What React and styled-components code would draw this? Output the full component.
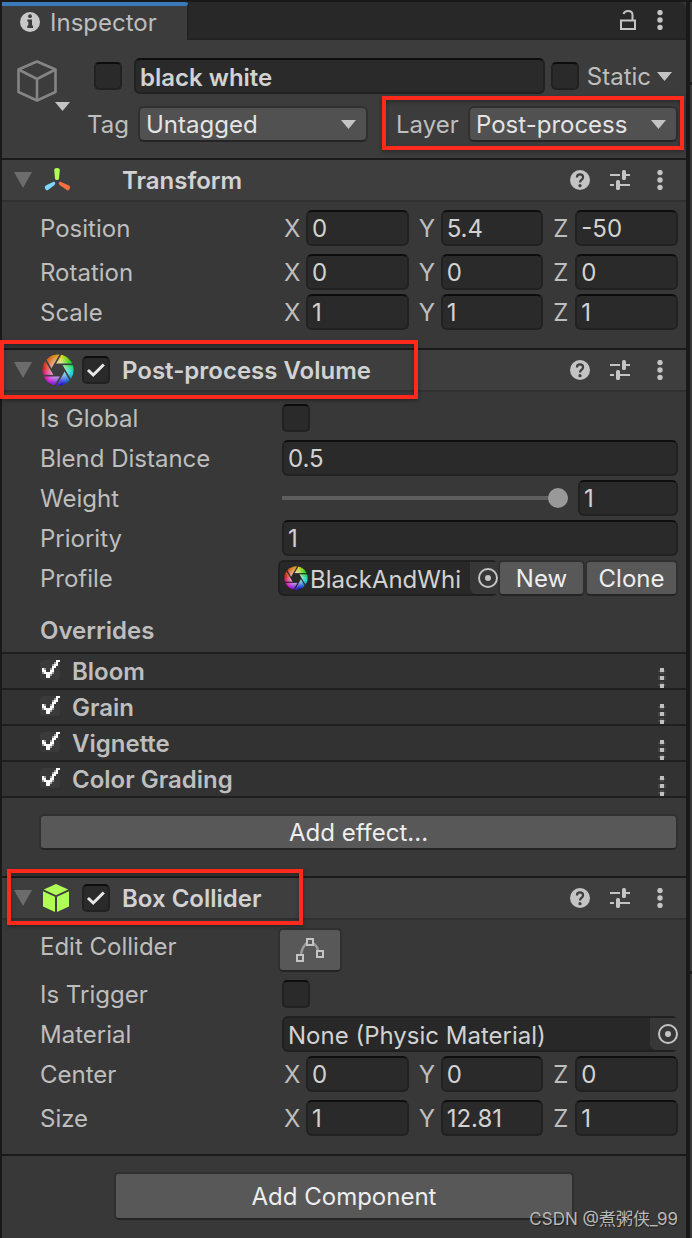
import React, { useState } from "react";
import styled, { createGlobalStyle } from "styled-components";

const overrides = ["Bloom", "Grain", "Vignette", "Color Grading"];
const axes = ["X", "Y", "Z"];

function ApertureIcon({ size, hole }) {
  // hue starts at red on the left and runs clockwise
  const slices = Array.from({ length: 36 }, (_, i) => {
    const a = Math.PI + (i * Math.PI) / 18;
    const b = a + Math.PI / 16;
    const hue = i < 9 ? i * 5 : i < 18 ? 45 + (i - 9) * 14 : 171 + (i - 18) * 10;
    return (
      <path
        key={i}
        d={`M16 16L${16 + 15.5 * Math.cos(a)} ${16 + 15.5 * Math.sin(a)}A15.5 15.5 0 0 1 ${
          16 + 15.5 * Math.cos(b)
        } ${16 + 15.5 * Math.sin(b)}Z`}
        fill={`hsl(${hue} 78% 48%)`}
      />
    );
  });
  return (
    <svg width={size} height={size} viewBox="0 0 32 32" aria-hidden="true">
      <defs>
        <radialGradient id={`shine${size}`}>
          <stop offset="0.4" stopColor="#fff" stopOpacity="0.6" />
          <stop offset="0.95" stopColor="#fff" stopOpacity="0" />
        </radialGradient>
      </defs>
      {slices}
      <circle cx="16" cy="16" r="15.5" fill={`url(#shine${size})`} />
      <path d="M22.6 16L19.3 21.7H12.7L9.4 16L12.7 10.3H19.3Z" fill={hole} />
      {[0, 60, 120, 180, 240, 300].map((angle) => (
        <path key={angle} d="M12.7 10.3H32" stroke={hole} strokeWidth="1.6" transform={`rotate(${angle} 16 16)`} />
      ))}
    </svg>
  );
}

function TransformIcon() {
  return (
    <svg width="32" height="32" viewBox="0 0 32 32" aria-hidden="true">
      <path d="M12.2 6Q12.2 4 15 4Q17.8 4 17.8 6L17 14.5Q16.7 16 15 16Q13.3 16 13 14.5Z" fill="#b0ff57" />
      <path d="M12.8 18Q14 19.6 12.5 21L6 26.1Q4.4 27 3.2 25Q2 22.6 3.7 21.6L11 18Q12 17.5 12.8 18Z" fill="#7fd6fd" />
      <path d="M17.2 18Q16 19.6 17.5 21L24.8 26.1Q26.4 27 27.6 25Q28.8 22.6 27.1 21.6L19 18Q18 17.5 17.2 18Z" fill="#ff6e40" />
    </svg>
  );
}

function ColliderIcon() {
  return (
    <svg width="32" height="32" viewBox="0 0 32 32" fill="#b0ff57" aria-hidden="true">
      <path d="M14 2L26.2 7.5L14 13.2L1.8 7.5Z" />
      <path d="M1 9.3L13 14.8V30L1 24.4Z" />
      <path d="M27 9.3L15 14.8V30L27 24.4Z" />
    </svg>
  );
}

function CubeIcon() {
  return (
    <svg width="40" height="42" viewBox="0 0 40 42" fill="none" stroke="#858585" strokeWidth="2.6" strokeLinejoin="round" aria-hidden="true">
      <path d="M20 1.5L38.5 9.5V32L20 40.5L1.5 32V9.5Z" />
      <path d="M1.5 9.5L20 19L38.5 9.5M20 19V40.5" />
    </svg>
  );
}

function Arrow({ fill = "#c4c4c4" }) {
  return (
    <svg width="15" height="9" viewBox="0 0 15 9" aria-hidden="true">
      <path d="M0 0H15L7.5 9Z" fill={fill} />
    </svg>
  );
}

function Dots() {
  return (
    <svg width="20" height="20" viewBox="0 0 20 20" fill="#c4c4c4" aria-hidden="true">
      <circle cx="10" cy="2.6" r="2.7" />
      <circle cx="10" cy="10" r="2.7" />
      <circle cx="10" cy="17.4" r="2.7" />
    </svg>
  );
}

function SmallDots() {
  return (
    <svg width="8" height="20" viewBox="0 0 8 20" fill="#c0c0c0" aria-hidden="true">
      <path d="M2 0H6V4H2ZM2 8H6V12H2ZM2 16H6V20H2Z" />
      <path d="M0 2H8V4H0ZM0 8H8V12H0ZM0 16H8V18H0ZM2 4H6V6H2ZM2 14H6V16H2Z" fillOpacity="0.15" />
    </svg>
  );
}

function PickerIcon() {
  return (
    <svg width="20" height="20" viewBox="0 0 20 20" aria-hidden="true">
      <circle cx="10" cy="10" r="9" fill="none" stroke="#c4c4c4" strokeWidth="2" />
      <circle cx="10" cy="10" r="3" fill="#c4c4c4" />
    </svg>
  );
}

function Check({ label, defaultChecked }) {
  return (
    <CheckWrap>
      <CheckInput type="checkbox" aria-label={label} defaultChecked={defaultChecked} />
      <svg width="28" height="28" viewBox="0 0 28 28" fill="none" stroke="#e8e8e8" strokeWidth="3" aria-hidden="true">
        <path d="M6 14L11.2 19L21.8 8.5" />
      </svg>
    </CheckWrap>
  );
}

function OverrideItem({ name }) {
  return (
    <OverrideRow>
      <OverrideLabel>
        <MiniCheck>
          <input type="checkbox" defaultChecked />
          <svg width="20" height="20" viewBox="0 0 20 20" fill="#fff" aria-hidden="true">
            <path d="M2 8H4V10H6V12H10V10H12V6H14V4H16V0H20V2H18V6H16V8H14V12H12V14H10V18H6V14H4V12H2Z" />
            <path d="M4 8H6V10H4ZM10 8H12V10H10ZM12 4H14V6H12ZM14 2H16V4H14ZM12 12H14V14H12ZM10 14H12V16H10ZM2 12H4V14H2Z" fillOpacity="0.5" />
          </svg>
        </MiniCheck>
        {name}
      </OverrideLabel>
      <MiniMenu type="button" aria-label={`${name} options`}>
        <SmallDots />
      </MiniMenu>
    </OverrideRow>
  );
}

function VectorRow({ label, values, spaced }) {
  return (
    <Row $spaced={spaced}>
      <span>{label}</span>
      <Vector>
        {axes.map((axis, i) => (
          <Axis key={axis}>
            <span>{axis}</span>
            <Field defaultValue={values[i]} />
          </Axis>
        ))}
      </Vector>
    </Row>
  );
}

function ComponentHeader({ title, icon, toggle, mark }) {
  return (
    <Header>
      <Foldout type="button" aria-label={`Fold ${title}`}>
        <svg width="18" height="16" viewBox="0 0 18 16" aria-hidden="true">
          <path d="M0 0H18L9 16Z" fill="#6c6c6c" />
        </svg>
      </Foldout>
      <HeaderIcon>{icon}</HeaderIcon>
      <ToggleSlot>{toggle && <Check label={`Enable ${title}`} defaultChecked />}</ToggleSlot>
      <h2>{title}</h2>
      <IconButton type="button" aria-label="Help">
        <svg width="20" height="20" viewBox="0 0 20 20" aria-hidden="true">
          <circle cx="10" cy="10" r="10" fill="#c4c4c4" />
          <path d="M6.9 7.6Q6.9 4.4 10 4.4Q13.1 4.4 13.1 7.3Q13.1 8.8 11.3 10Q10.1 10.9 10 12.5" fill="none" stroke="#3e3e3e" strokeWidth="2.2" />
          <circle cx="10" cy="15.7" r="1.6" fill="#3e3e3e" />
        </svg>
      </IconButton>
      <IconButton type="button" aria-label="Presets">
        <svg width="20" height="20" viewBox="0 0 20 20" fill="#c4c4c4" aria-hidden="true">
          <path d="M0 4H10V6H0ZM16 4H20V6H16ZM0 14H4V16H0ZM10 14H20V16H10Z" />
          <rect x="12" y="0" width="4" height="10" rx="1.5" />
          <rect x="6" y="10" width="4" height="10" rx="1.5" />
        </svg>
      </IconButton>
      <IconButton type="button" aria-label="Menu">
        <Dots />
      </IconButton>
      {mark && <Mark $area={mark} />}
    </Header>
  );
}

function App() {
  const [weight, setWeight] = useState(1);
  return (
    <Page>
      <GlobalStyle />
      <Panel>
        <TabBar>
          <Tab type="button">
            <svg width="20" height="20" viewBox="0 0 20 20" aria-hidden="true">
              <circle cx="10" cy="10" r="10" fill="#c8c8c8" />
              <circle cx="10" cy="4.2" r="1.9" fill="#3c3c3c" />
              <path d="M7.3 7.5H12V13.5H13V16H7.3V13.5H8.3V9.5H7.3Z" fill="#3c3c3c" />
            </svg>
            Inspector
          </Tab>
          <IconButton type="button" aria-label="Lock">
            <svg width="20" height="20" viewBox="0 0 20 20" fill="none" stroke="#c4c4c4" strokeWidth="2" aria-hidden="true">
              <rect x="3" y="10.5" width="14" height="8.5" />
              <path d="M5.5 4Q6.5 1 10 1Q14.5 1 14.5 5V10" />
            </svg>
          </IconButton>
          <IconButton type="button" aria-label="Menu" $near>
            <Dots />
          </IconButton>
        </TabBar>

        <ObjectHeader>
          <ObjectIcon type="button" aria-label="Select icon">
            <CubeIcon />
            <Arrow />
          </ObjectIcon>
          <ObjectFields>
            <NameRow>
              <Check label="Active" />
              <NameField aria-label="Name" defaultValue="black white" />
              <Check label="Static" />
              <StaticButton type="button">
                Static
                <Arrow />
              </StaticButton>
            </NameRow>
            <TagRow>
              <label htmlFor="tag">Tag</label>
              <SelectBox>
                <select id="tag">
                  <option>Untagged</option>
                </select>
                <Arrow />
              </SelectBox>
              <label htmlFor="layer">Layer</label>
              <SelectBox>
                <select id="layer">
                  <option>Post-process</option>
                </select>
                <Arrow />
              </SelectBox>
            </TagRow>
          </ObjectFields>
          <Mark $area="56px 2px 8px 380px" />
        </ObjectHeader>

        <Section>
          <ComponentHeader title="Transform" icon={<TransformIcon />} />
          <Body>
            <VectorRow label="Position" values={["0", "5.4", "-50"]} spaced />
            <VectorRow label="Rotation" values={["0", "0", "0"]} />
            <VectorRow label="Scale" values={["1", "1", "1"]} />
          </Body>
        </Section>

        <Section>
          <ComponentHeader
            title="Post-process Volume"
            icon={<ApertureIcon size={32} hole="#3e3e3e" />}
            toggle
            mark="-10px 268px -9px -2px"
          />
          <Body>
            <Row>
              <span>Is Global</span>
              <Check label="Is Global" />
            </Row>
            <Row>
              <label htmlFor="blend">Blend Distance</label>
              <Field id="blend" defaultValue="0.5" />
            </Row>
            <Row>
              <label htmlFor="weight">Weight</label>
              <WeightControl>
                <Slider
                  id="weight"
                  type="range"
                  min="0"
                  max="1"
                  step="0.01"
                  value={weight}
                  onChange={(e) => setWeight(e.target.value)}
                />
                <Field aria-label="Weight value" value={weight} onChange={(e) => setWeight(e.target.value)} />
              </WeightControl>
            </Row>
            <Row>
              <label htmlFor="priority">Priority</label>
              <Field id="priority" defaultValue="1" />
            </Row>
            <Row>
              <label htmlFor="profile">Profile</label>
              <ProfileControl>
                <ObjectField>
                  <ApertureIcon size={24} hole="#282828" />
                  <input id="profile" readOnly value="BlackAndWhi" />
                  <Picker type="button" aria-label="Pick profile">
                    <PickerIcon />
                  </Picker>
                </ObjectField>
                <Button type="button">New</Button>
                <Button type="button">Clone</Button>
              </ProfileControl>
            </Row>
            <OverridesTitle>Overrides</OverridesTitle>
            <OverrideList>
              {overrides.map((name) => (
                <OverrideItem key={name} name={name} />
              ))}
            </OverrideList>
            <AddEffect type="button">Add effect...</AddEffect>
          </Body>
        </Section>

        <Section>
          <ComponentHeader title="Box Collider" icon={<ColliderIcon />} toggle mark="-9px 383px -7px 5px" />
          <Body>
            <Row>
              <span>Edit Collider</span>
              <EditButton type="button" aria-label="Edit Collider">
                <svg width="28" height="26" viewBox="0 0 28 26" fill="none" stroke="#c4c4c4" strokeWidth="2" aria-hidden="true">
                  <path d="M5 17Q6 10 11 6M17 6Q21 9 22 13" stroke="#9a9a9a" strokeWidth="2.5" />
                  <rect x="11" y="2" width="6" height="6" />
                  <rect x="1" y="18" width="6" height="6" />
                  <rect x="21" y="14" width="6" height="6" />
                </svg>
              </EditButton>
            </Row>
            <Row>
              <span>Is Trigger</span>
              <Check label="Is Trigger" />
            </Row>
            <Row>
              <label htmlFor="material">Material</label>
              <ObjectField>
                <input id="material" readOnly value="None (Physic Material)" />
                <Picker type="button" aria-label="Pick material">
                  <PickerIcon />
                </Picker>
              </ObjectField>
            </Row>
            <VectorRow label="Center" values={["0", "0", "0"]} spaced />
            <VectorRow label="Size" values={["1", "12.81", "1"]} />
          </Body>
        </Section>

        <Footer>
          <AddComponent type="button">Add Component</AddComponent>
        </Footer>
      </Panel>
      <Neighbour>
        <i />
        <i />
        <i />
      </Neighbour>
      <Watermark>CSDN @煮粥侠_99</Watermark>
    </Page>
  );
}

const GlobalStyle = createGlobalStyle`
  * {
    box-sizing: border-box;
  }
  body {
    margin: 0;
    background: #191919;
  }
  body, button, input, select {
    font-family: Inter, "Noto Sans CJK SC", sans-serif;
    font-size: 24px;
    font-weight: 400;
    color: #bebebe;
  }
  button {
    padding: 0;
    border: none;
    background: none;
  }
  svg {
    display: block;
    flex: none;
  }
`;

const Page = styled.div`
  position: relative;
  display: flex;
  min-height: 100vh;
  padding: 2px 0 0 2px;
  line-height: 36px;
`;

const Panel = styled.main`
  flex: 1;
  min-width: 0;
  display: flex;
  flex-direction: column;
  background: #383838;
`;

const Neighbour = styled.aside`
  width: 2px;
  margin-left: 4px;
  display: flex;
  flex-direction: column;
  gap: 3px;
  i {
    flex: 80;
    background: #383838;
  }
  i:nth-child(2) {
    flex: 890;
  }
  i:nth-child(3) {
    flex: 265;
  }
`;

const IconButton = styled.button`
  width: 20px;
  height: 20px;
  margin-left: ${(props) => (props.$near ? "12px" : "20px")};
`;

const TabBar = styled.div`
  display: flex;
  align-items: center;
  height: 38px;
  padding: 0 16px 2px 0;
  background: #282828;
  box-shadow: inset 0 -2px #222222;
  border-top-right-radius: 6px;
`;

const Tab = styled.button`
  display: flex;
  align-items: center;
  gap: 10px;
  width: 187px;
  height: 38px;
  margin: 0 auto -2px 0;
  padding: 0 0 2px 18px;
  background: #3c3c3c;
  border-top: 4px solid #3a79bb;
  border-right: 2px solid #222222;
  border-top-right-radius: 4px;
`;

const ObjectHeader = styled.header`
  position: relative;
  display: flex;
  gap: 30px;
  height: 118px;
  padding: 18px 8px 0 15px;
  background: #3c3c3c;
`;

const ObjectIcon = styled.button`
  display: flex;
  flex-direction: column;
  align-items: flex-end;
  width: 40px;
  padding-top: 2px;
  > svg + svg {
    margin-right: -13px;
  }
`;

const ObjectFields = styled.div`
  flex: 1;
  min-width: 0;
  display: flex;
  flex-direction: column;
  gap: 12px;
`;

const NameRow = styled.div`
  display: flex;
  align-items: center;
  padding-left: 7px;
`;

const StaticButton = styled.button`
  display: flex;
  align-items: center;
  gap: 6px;
  padding: 0 6px 0 8px;
`;

const TagRow = styled.div`
  display: grid;
  grid-template-columns: 51px 23fr 100px 21fr;
  label {
    padding-top: 2px;
    line-height: 34px;
  }
  label:nth-of-type(2) {
    padding-left: 28px;
  }
`;

const SelectBox = styled.div`
  position: relative;
  select {
    display: block;
    width: 100%;
    height: 36px;
    appearance: none;
    background: #515151;
    border: 2px solid #303030;
    border-bottom-color: #242424;
    border-radius: 6px;
    color: #e4e4e4;
    outline: none;
    padding: 0 6px;
  }
  svg {
    position: absolute;
    right: 12px;
    top: 14px;
    pointer-events: none;
  }
`;

const Field = styled.input`
  display: block;
  width: 100%;
  min-width: 0;
  height: 36px;
  padding: 0 4px;
  background: #2a2a2a;
  border: 2px solid #212121;
  border-top-color: #0d0d0d;
  border-radius: 6px;
  color: #d2d2d2;
  outline: none;
`;

const NameField = styled(Field)`
  flex: 1;
  margin: 0 6px 0 12px;
  padding-top: 2px;
  font-weight: 600;
`;

const CheckWrap = styled.label`
  position: relative;
  display: block;
  width: 28px;
  height: 28px;
  svg {
    position: absolute;
    inset: 0;
    visibility: hidden;
    pointer-events: none;
  }
  input:checked + svg {
    visibility: visible;
  }
`;

const CheckInput = styled.input`
  display: block;
  width: 28px;
  height: 28px;
  margin: 0;
  appearance: none;
  background: #2a2a2a;
  border: 2px solid #212121;
  border-top-color: #0d0d0d;
  border-radius: 5px;
`;

const Section = styled.section`
  border-top: 2px solid #1a1a1a;
`;

const Header = styled.div`
  position: relative;
  display: flex;
  align-items: center;
  height: 42px;
  padding-right: 16px;
  background: #3e3e3e;
  border-bottom: 2px solid #303030;
  h2 {
    flex: 1;
    margin: 0;
    padding-top: 2px;
    font-size: 24px;
    font-weight: 600;
    color: #d2d2d2;
  }
`;

const Foldout = styled.button`
  margin: 0 10px 0 12px;
`;

const HeaderIcon = styled.span`
  width: 32px;
  margin-right: 8px;
`;

const ToggleSlot = styled.span`
  width: 28px;
  margin-right: 12px;
`;

const Mark = styled.div`
  position: absolute;
  z-index: 1;
  inset: ${(props) => props.$area};
  border: 4px solid #ff2a1c;
  box-shadow: 0 2px 4px rgba(0, 0, 0, 0.3), inset 0 2px 4px rgba(0, 0, 0, 0.3);
  pointer-events: none;
`;

const Body = styled.div`
  display: flex;
  flex-direction: column;
  gap: 4px;
  padding: 8px 0 18px;
`;

const Row = styled.div`
  display: grid;
  grid-template-columns: 242px minmax(0, 1fr);
  align-items: center;
  min-height: 36px;
  padding: 0 8px 0 38px;
  margin-bottom: ${(props) => (props.$spaced ? "4px" : "0")};
  > :first-child {
    align-self: start;
    padding-top: 2px;
    line-height: 34px;
  }
`;

const Vector = styled.div`
  display: grid;
  grid-template-columns: repeat(3, minmax(0, 1fr));
  gap: 8px;
`;

const Axis = styled.label`
  display: grid;
  grid-template-columns: 24px minmax(0, 1fr);
  span {
    padding: 2px 0 0 2px;
    line-height: 34px;
  }
`;

const WeightControl = styled.div`
  display: grid;
  grid-template-columns: minmax(0, 1fr) 100px;
  align-items: center;
  gap: 10px;
`;

const Slider = styled.input`
  width: 100%;
  height: 20px;
  margin: 0;
  appearance: none;
  background: linear-gradient(#5e5e5e, #5e5e5e) center / 100% 4px no-repeat;
  &::-webkit-slider-thumb {
    appearance: none;
    width: 20px;
    height: 20px;
    border-radius: 50%;
    background: #999999;
  }
`;

const ProfileControl = styled.div`
  display: grid;
  grid-template-columns: minmax(0, 1fr) 87px 93px;
  margin-left: -4px;
`;

const ObjectField = styled.div`
  display: flex;
  align-items: center;
  height: 36px;
  background: #282828;
  border: 2px solid #202020;
  border-right: none;
  border-radius: 6px;
  > svg {
    margin-left: 4px;
  }
  input {
    flex: 1;
    min-width: 0;
    height: 32px;
    padding: 2px 4px 0;
    background: none;
    border: none;
    outline: none;
    color: #d2d2d2;
  }
  > svg + input {
    padding: 2px 0 0 2px;
  }
`;

const Picker = styled.button`
  display: flex;
  align-items: center;
  justify-content: flex-end;
  width: 28px;
  height: 32px;
  background: #373737;
  border-bottom-left-radius: 6px;
`;

const Button = styled.button`
  height: 36px;
  background: #585858;
  border: 2px solid #303030;
  border-bottom-color: #242424;
  border-radius: 5px;
  color: #eeeeee;
`;

const OverridesTitle = styled.h3`
  margin: 8px 0 0;
  padding: 5px 38px 0;
  height: 40px;
  font-size: 24px;
  font-weight: 600;
  line-height: 36px;
`;

const OverrideList = styled.ul`
  margin: 0;
  padding: 0;
  list-style: none;
  background: #323232;
  border-top: 2px solid #1f1f1f;
`;

const OverrideRow = styled.li`
  display: flex;
  justify-content: space-between;
  height: 36px;
  padding: 0 20px 0 38px;
  border-bottom: 2px solid #1f1f1f;
`;

const OverrideLabel = styled.label`
  display: flex;
  gap: 12px;
  font-weight: 600;
`;

const MiniCheck = styled.span`
  position: relative;
  width: 20px;
  height: 20px;
  margin-top: 6px;
  input {
    display: block;
    width: 20px;
    height: 20px;
    margin: 0;
    appearance: none;
    background: #3a3a3a;
    border-radius: 3px;
  }
  svg {
    position: absolute;
    inset: 0;
    visibility: hidden;
  }
  input:checked + svg {
    visibility: visible;
  }
`;

const MiniMenu = styled.button`
  align-self: flex-end;
`;

const AddEffect = styled(Button)`
  margin: 12px 8px 8px 37px;
`;

const EditButton = styled(Button)`
  display: flex;
  align-items: center;
  justify-content: center;
  width: 64px;
  height: 44px;
  margin-left: -4px;
`;

const Footer = styled.footer`
  flex: 1;
  padding: 16px 16%;
  border-top: 2px solid #1a1a1a;
  display: flex;
  align-items: flex-start;
  justify-content: center;
`;

const AddComponent = styled(Button)`
  width: 100%;
  max-width: 460px;
  height: 48px;
`;

const Watermark = styled.div`
  position: absolute;
  right: 14px;
  bottom: 7px;
  font-size: 17px;
  line-height: 24px;
  color: #b8b8b8;
  text-shadow: 1px 1px 1px #202020;
`;

export default App;
